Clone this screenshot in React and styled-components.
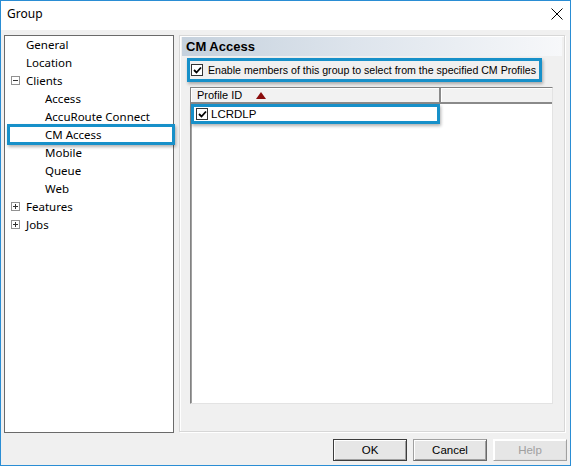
import React from 'react';
import styled, { createGlobalStyle } from 'styled-components';

const GlobalStyle = createGlobalStyle`
  html, body {
    margin: 0;
    padding: 0;
    background: #f0f0f0;
  }
  * {
    box-sizing: border-box;
  }
`;

const accent = '#1790c9';

const Window = styled.div`
  width: 571px;
  height: 466px;
  border: 1px solid #2a8dd4;
  background: #f0f0f0;
  display: flex;
  flex-direction: column;
  font-family: 'Liberation Sans', Arial, sans-serif;
  font-size: 11px;
  color: #000;
`;

const TitleBar = styled.div`
  height: 29px;
  flex: none;
  background: #fff;
  display: flex;
  align-items: center;
  justify-content: space-between;
  padding: 0 7px 4px 6px;
  font-family: 'Noto Sans', 'Segoe UI', sans-serif;
  font-size: 12px;
`;

const Body = styled.div`
  flex: none;
  display: flex;
  gap: 5px;
  margin-top: 5px;
  padding: 0 4px 0 3px;
`;

const Tree = styled.div`
  width: 170px;
  height: 398px;
  flex: none;
  background: #fff;
  border: 1px solid #6a6a6a;
  font-family: 'Noto Sans', 'Segoe UI', sans-serif;
  font-size: 11.5px;
`;

const TreeRow = styled.div`
  position: relative;
  height: 18px;
  display: flex;
  align-items: center;
  padding-bottom: 2px;
  padding-left: ${(p) => (p.$level ? 40 : 6)}px;

  ${(p) =>
    p.$marked &&
    `
    &::after {
      content: '';
      position: absolute;
      left: 2px;
      right: -2px;
      top: -2px;
      bottom: -1px;
      border: 3px solid ${accent};
      box-shadow: 1px 2px 3px rgba(0, 0, 0, 0.3);
    }
  `}
`;

const Expander = styled.span`
  width: 9px;
  height: 9px;
  flex: none;
  border: 1px solid #919191;
  margin-right: 6px;
  position: relative;
  visibility: ${(p) => (p.$hidden ? 'hidden' : 'visible')};

  &::before {
    content: '';
    position: absolute;
    left: 1px;
    top: 3px;
    width: 5px;
    height: 1px;
    background: #333;
  }

  &::after {
    content: '';
    position: absolute;
    left: 3px;
    top: 1px;
    width: 1px;
    height: 5px;
    background: #333;
    display: ${(p) => (p.$open ? 'none' : 'block')};
  }
`;

const Panel = styled.div`
  width: 386px;
  height: 397px;
  flex: none;
  border: 1px solid #d7d7d7;
  box-shadow: 1px 1px 0 #fff, inset 1px 1px 0 #fff;
  padding: 1px 2px;
  display: flex;
  flex-direction: column;
`;

const Heading = styled.div`
  height: 19px;
  flex: none;
  background: linear-gradient(to right, #c5d1dd 0%, #dde4ec 45%, #f7f8fa 100%);
  padding-left: 4px;
  display: flex;
  align-items: center;
  font-size: 13px;
  font-weight: bold;
`;

const OptionRow = styled.label`
  margin: 2px 0 0 5px;
  width: 355px;
  height: 24px;
  border: 3px solid ${accent};
  box-shadow: 1px 2px 3px rgba(0, 0, 0, 0.3);
  display: flex;
  align-items: center;
  gap: 5px;
  padding-left: 1px;
  white-space: nowrap;
  font-size: 10.6px;
`;

const CheckBox = styled.span`
  width: ${(p) => p.$size || 12}px;
  height: ${(p) => p.$size || 12}px;
  flex: none;
  background: #fff;
  border: 1px solid #333;
  display: flex;
  align-items: center;
  justify-content: center;
`;

const ListView = styled.div`
  margin: 5px 0 0 8px;
  width: 363px;
  height: 317px;
  background: #fff;
  border-style: solid;
  border-width: 1px;
  border-color: #828282 #e3e3e3 #e3e3e3 #828282;
  box-shadow: inset 1px 1px 0 #a0a0a0;
`;

const HeaderRow = styled.div`
  height: 16px;
  display: flex;
  background: #f2f2f2;
  border-bottom: 2px solid #8a8a8a;
  box-shadow: inset 0 1px 0 #fff;
`;

const HeaderCell = styled.div`
  width: ${(p) => (p.$width ? `${p.$width}px` : 'auto')};
  flex: ${(p) => (p.$width ? 'none' : '1')};
  display: flex;
  align-items: center;
  gap: 14px;
  padding-left: 6px;
  border-right: ${(p) => (p.$width ? '2px solid #8a8a8a' : 'none')};
  box-shadow: inset 1px 0 0 #fff;
`;

const SortArrow = styled.span`
  width: 0;
  height: 0;
  border-left: 5px solid transparent;
  border-right: 5px solid transparent;
  border-bottom: 7px solid #8b0d0d;
`;

const ListRow = styled.div`
  width: 249px;
  height: 20px;
  border: 3px solid ${accent};
  box-shadow: 1px 2px 3px rgba(0, 0, 0, 0.3);
  display: flex;
  align-items: center;
  gap: 3px;
  padding-left: 2px;
  font-size: 11.5px;
`;

const Footer = styled.div`
  flex: none;
  display: flex;
  justify-content: flex-end;
  gap: 6px;
  margin-top: 6px;
  padding-right: 3px;
`;

const Button = styled.button`
  width: 74px;
  height: 22px;
  padding: 0;
  font-family: 'Liberation Sans', Arial, sans-serif;
  font-size: 11.5px;
  background: #e6e6e6;
  color: ${(p) => (p.disabled ? '#a0a0a0' : '#000')};
  border: 1px solid ${(p) => (p.$default ? '#3c3c3c' : '#a0a0a0')};
  border-right-color: ${(p) => (p.$default ? '#3c3c3c' : '#696969')};
  border-bottom-color: ${(p) => (p.$default ? '#3c3c3c' : '#696969')};
  box-shadow: inset 1px 1px 0 #fff, inset -1px -1px 0 ${(p) => (p.disabled ? '#e0e0e0' : '#a0a0a0')};
  ${(p) => p.disabled && 'border-color: #fff #a0a0a0 #a0a0a0 #fff;'}
`;

const CheckMark = () => (
  <svg width="9" height="8" viewBox="0 0 9 8">
    <path d="M1 4 L3.5 6.5 L8 1.5" fill="none" stroke="#000" strokeWidth="1.8" />
  </svg>
);

const CloseIcon = () => (
  <svg width="12" height="12" viewBox="0 0 12 12">
    <path d="M0.5 0.5 L11.5 11.5 M11.5 0.5 L0.5 11.5" stroke="#000" strokeWidth="1" />
  </svg>
);

const treeItems = [
  { label: 'General', level: 0 },
  { label: 'Location', level: 0 },
  { label: 'Clients', level: 0, expander: 'open' },
  { label: 'Access', level: 1 },
  { label: 'AccuRoute Connect', level: 1 },
  { label: 'CM Access', level: 1, marked: true },
  { label: 'Mobile', level: 1 },
  { label: 'Queue', level: 1 },
  { label: 'Web', level: 1 },
  { label: 'Features', level: 0, expander: 'closed' },
  { label: 'Jobs', level: 0, expander: 'closed' },
];

const App = () => {
  return (
    <>
      <GlobalStyle />
      <Window>
        <TitleBar>
          <span>Group</span>
          <CloseIcon />
        </TitleBar>
        <Body>
          <Tree>
            {treeItems.map((item) => (
              <TreeRow key={item.label} $level={item.level} $marked={item.marked}>
                {item.level === 0 && (
                  <Expander $hidden={!item.expander} $open={item.expander === 'open'} />
                )}
                {item.label}
              </TreeRow>
            ))}
          </Tree>
          <Panel>
            <Heading>CM Access</Heading>
            <OptionRow>
              <CheckBox $size={12}>
                <CheckMark />
              </CheckBox>
              Enable members of this group to select from the specified CM Profiles
            </OptionRow>
            <ListView>
              <HeaderRow>
                <HeaderCell $width={250}>
                  Profile ID
                  <SortArrow />
                </HeaderCell>
                <HeaderCell />
              </HeaderRow>
              <ListRow>
                <CheckBox $size={12}>
                  <CheckMark />
                </CheckBox>
                LCRDLP
              </ListRow>
            </ListView>
          </Panel>
        </Body>
        <Footer>
          <Button $default>OK</Button>
          <Button>Cancel</Button>
          <Button disabled>Help</Button>
        </Footer>
      </Window>
    </>
  );
};

export default App;
